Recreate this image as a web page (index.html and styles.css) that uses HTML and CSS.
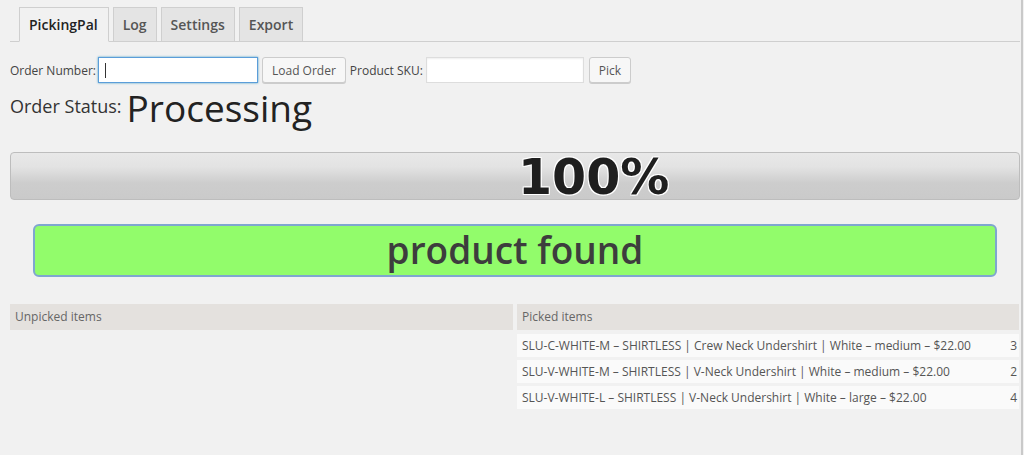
FILE: index.html
```html
<!DOCTYPE html>
<html>
<head>
<meta charset="utf-8">
<link rel="stylesheet" href="styles.css">
</head>
<body>
<div class="page">
  <nav class="tabs">
    <span class="tab active">PickingPal</span>
    <span class="tab">Log</span>
    <span class="tab">Settings</span>
    <span class="tab">Export</span>
  </nav>
  <div class="form-row">
    <label class="lbl">Order Number:</label>
    <span class="input focus order-input"><span class="caret"></span></span>
    <button class="btn">Load Order</button>
    <label class="lbl">Product SKU:</label>
    <span class="input sku-input"></span>
    <button class="btn">Pick</button>
  </div>
  <div class="status">
    <span class="status-label">Order Status:</span>
    <span class="status-value">Processing</span>
  </div>
  <div class="progress">
    <span class="progress-text">100%</span>
  </div>
  <div class="message">product found</div>
  <div class="lists">
    <div class="list">
      <div class="list-head">Unpicked items</div>
    </div>
    <div class="list">
      <div class="list-head">Picked items</div>
      <div class="item"><span>SLU-C-WHITE-M – SHIRTLESS | Crew Neck Undershirt | White – medium – $22.00</span><span>3</span></div>
      <div class="item"><span>SLU-V-WHITE-M – SHIRTLESS | V-Neck Undershirt | White – medium – $22.00</span><span>2</span></div>
      <div class="item"><span>SLU-V-WHITE-L – SHIRTLESS | V-Neck Undershirt | White – large – $22.00</span><span>4</span></div>
    </div>
  </div>
</div>
</body>
</html>
```

FILE: styles.css
```css
html, body {
  margin: 0;
  padding: 0;
  background: #f1f1f1;
}
body {
  font-family: "Open Sans", "Noto Sans", sans-serif;
  color: #444;
  height: 455px;
  overflow: hidden;
}
.page {
  width: 1023px;
  height: 455px;
  border-right: 2px solid #c9c9c9;
  box-sizing: border-box;
  padding: 7px 0 0 10px;
}
.tabs {
  display: flex;
  gap: 4px;
  padding-left: 9px;
  border-bottom: 1px solid #cfcfcf;
  width: 1001px;
}
.tab {
  display: block;
  height: 33px;
  line-height: 33px;
  padding: 0 9px;
  font-size: 14px;
  font-weight: 600;
  color: #555;
  background: #e4e4e4;
  border: 1px solid #cfcfcf;
  border-bottom: none;
  margin-bottom: -1px;
}
.tab.active {
  background: #f1f1f1;
  color: #222;
  border-bottom: 1px solid #f1f1f1;
  padding: 0 10px 0 9px;
}
.form-row {
  display: flex;
  align-items: center;
  margin-top: 15px;
  height: 26px;
}
.lbl {
  font-size: 12px;
  color: #444;
  margin-right: 2px;
}
.lbl + .sku-input { margin-left: 1px; }
.input {
  display: block;
  height: 24px;
  background: #fff;
  border: 1px solid #ddd;
  box-shadow: inset 0 1px 2px rgba(0,0,0,0.07);
  margin-right: 4px;
  position: relative;
}
.order-input { width: 158px; }
.sku-input { width: 156px; margin-right: 5px; }
.input.focus {
  border-color: #5b9dd9;
  box-shadow: 0 0 2px rgba(30,140,190,0.8);
}
.caret {
  position: absolute;
  left: 6px;
  top: 5px;
  width: 1px;
  height: 15px;
  background: #333;
}
.btn {
  height: 26px;
  font-family: "Open Sans", "Noto Sans", sans-serif;
  font-size: 12px;
  color: #555;
  background: #f7f7f7;
  border: 1px solid #ccc;
  border-radius: 3px;
  box-shadow: 0 1px 0 #ccc;
  padding: 0 9px;
  margin-right: 4px;
}
.status {
  display: flex;
  align-items: flex-start;
  margin-top: 5px;
  height: 40px;
}
.status-label {
  font-size: 18px;
  line-height: 25px;
  color: #333;
  margin-top: 6px;
  margin-right: 5px;
}
.status-value {
  font-size: 37px;
  color: #222;
  line-height: 40px;
}
.progress {
  margin-top: 24px;
  width: 1010px;
  height: 48px;
  box-sizing: border-box;
  border: 1px solid #bdbdbd;
  border-radius: 4px;
  background: linear-gradient(#e8e8e8, #e3e3e3 30%, #cdcdcd 65%, #cacaca);
  position: relative;
}
.progress-text {
  position: absolute;
  left: 507px;
  top: 1px;
  font-family: "DejaVu Sans", sans-serif;
  font-weight: bold;
  font-size: 49px;
  line-height: 48px;
  color: #1f1f1f;
  text-shadow: -1px -1px 0 #fff, 1px -1px 0 #fff, -1px 1px 0 #fff, 1px 1px 0 #fff;
}
.message {
  margin: 24px 0 0 23px;
  width: 964px;
  height: 53px;
  box-sizing: border-box;
  background: #92fc6b;
  border: 2px solid #7fa6cf;
  border-radius: 6px;
  font-size: 37px;
  font-weight: 600;
  color: #3d3d3d;
  text-align: center;
  line-height: 48px;
}
.lists {
  display: flex;
  gap: 4px;
  margin-top: 27px;
  width: 1009px;
}
.list {
  flex: 0 0 503px;
  display: flex;
  flex-direction: column;
  gap: 3px;
}
.list:last-child { flex: 0 0 502px; }
.list-head {
  height: 26px;
  line-height: 26px;
  background: #e4e1de;
  font-size: 12px;
  color: #666;
  padding-left: 5px;
  margin-bottom: 1px;
}
.item {
  display: flex;
  justify-content: space-between;
  height: 23px;
  line-height: 23px;
  background: #fafafa;
  font-size: 12px;
  color: #555;
  padding: 0 2px 0 5px;
}
```
